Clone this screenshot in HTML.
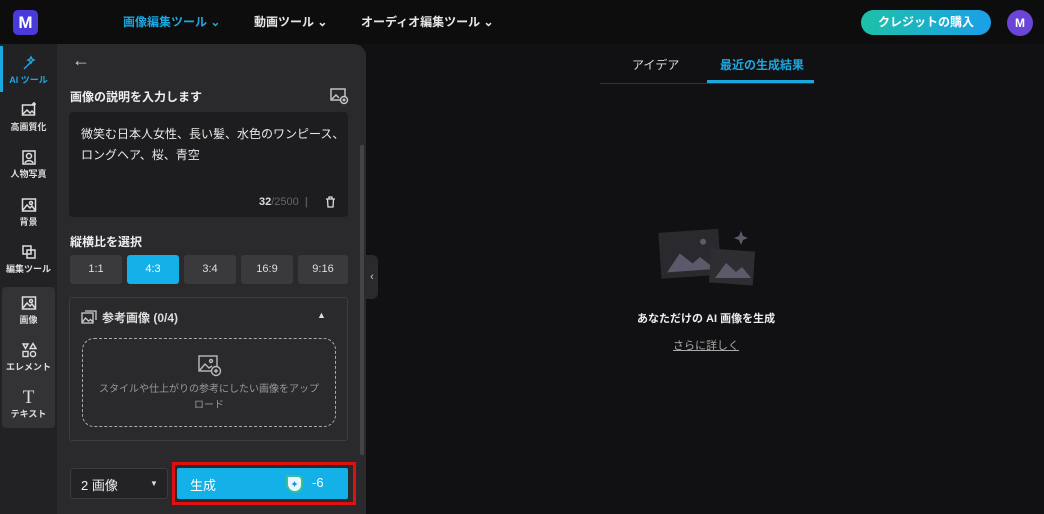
<!DOCTYPE html>
<html><head><meta charset="utf-8"><style>
*{box-sizing:border-box;margin:0;padding:0}
body{width:1044px;height:514px;overflow:hidden;background:#111113;font-family:"Liberation Sans","Noto Sans CJK JP",sans-serif;color:#e8e8e8;position:relative}
.a{position:absolute}
.top{left:0;top:0;width:1044px;height:44px;background:#0d0d0e}
.nav{top:13px;font-size:12px;font-weight:bold;color:#e6e6e6}
.side{left:0;top:44px;width:57px;height:470px;background:#222224}
.si{left:2px;width:53px;text-align:center;font-size:9px;font-weight:bold;color:#ddd}
.si svg{display:block;margin:0 auto 2px}
.panel{left:57px;top:44px;width:309px;height:470px;background:#2a2a2c;border-top-right-radius:12px}
.lbl{font-size:12px;font-weight:bold;color:#eee}
.ratio{top:255px;width:52px;height:29px;background:#3a3a3c;border-radius:3px;font-size:11px;text-align:center;line-height:29px;color:#ddd}
</style></head><body>
<div class="a top"></div>
<div class="a" style="left:13px;top:10px;width:25px;height:25px;border-radius:5px;background:#4b3adb;color:#fff;font-weight:bold;font-size:17px;text-align:center;line-height:25px">M</div>
<div class="a nav" style="left:123px;color:#1ba8e0">画像編集ツール ⌄</div>
<div class="a nav" style="left:254px">動画ツール ⌄</div>
<div class="a nav" style="left:361px">オーディオ編集ツール ⌄</div>
<div class="a" style="left:861px;top:10px;width:130px;height:25px;border-radius:13px;background:linear-gradient(90deg,#1fc0a8,#1aa0e8);color:#fff;font-size:12px;font-weight:bold;text-align:center;line-height:25px">クレジットの購入</div>
<div class="a" style="left:1007px;top:10px;width:26px;height:26px;border-radius:50%;background:#6a45d8;color:#fff;font-size:12px;font-weight:bold;text-align:center;line-height:26px">M</div>

<div class="a side"></div>
<div class="a" style="left:0;top:46px;width:3px;height:46px;background:#1ba8e0"></div>
<div class="a" style="left:2px;top:287px;width:53px;height:141px;background:#333335;border-radius:4px"></div>
<div class="a si" style="top:55px;color:#1ba8e0"><svg width="16" height="16" viewBox="0 0 16 16" fill="none" stroke="#1ba8e0" stroke-width="1.5"><path d="M3 14L11 6M10 2l1 2 2 1-2 1-1 2-1-2-2-1 2-1z"/></svg>AI ツール</div>
<div class="a si" style="top:102px"><svg width="16" height="16" viewBox="0 0 16 16" fill="none" stroke="#ddd" stroke-width="1.5"><rect x="1.5" y="3" width="12" height="10"/><path d="M2 12l4-4 3 3 2-2 3 3"/><path d="M13 0v4M11 2h4"/></svg>高画質化</div>
<div class="a si" style="top:149px"><svg width="16" height="16" viewBox="0 0 16 16" fill="none" stroke="#ddd" stroke-width="1.5"><rect x="2" y="2" width="12" height="13"/><circle cx="8" cy="7" r="2.5"/><path d="M4 14c1-3 7-3 8 0"/></svg>人物写真</div>
<div class="a si" style="top:197px"><svg width="16" height="16" viewBox="0 0 16 16" fill="none" stroke="#ddd" stroke-width="1.5"><rect x="1.5" y="2" width="13" height="12"/><path d="M2 13l4-5 3 3 2-2 3 4"/><circle cx="10" cy="6" r="1.5"/></svg>背景</div>
<div class="a si" style="top:244px"><svg width="16" height="16" viewBox="0 0 16 16" fill="none" stroke="#ddd" stroke-width="1.5"><rect x="2" y="2" width="8" height="8"/><rect x="6" y="6" width="8" height="8"/></svg>編集ツール</div>
<div class="a si" style="top:295px"><svg width="16" height="16" viewBox="0 0 16 16" fill="none" stroke="#ddd" stroke-width="1.5"><rect x="1.5" y="2" width="13" height="12"/><path d="M2 13l4-5 3 3 2-2 3 4"/><circle cx="10" cy="6" r="1.5"/></svg>画像</div>
<div class="a si" style="top:342px"><svg width="16" height="16" viewBox="0 0 16 16" fill="none" stroke="#ddd" stroke-width="1.4"><path d="M2 2h5L4.5 6.5z"/><path d="M12 1.5l3 5H9z"/><rect x="2" y="9.5" width="5" height="5"/><circle cx="12" cy="12" r="2.6"/></svg>エレメント</div>
<div class="a si" style="top:388px"><div style="font-size:19px;font-family:'Liberation Serif',serif;font-weight:normal;line-height:19px">T</div>テキスト</div>

<div class="a panel"></div>
<div class="a" style="left:72px;top:50px;font-size:18px;color:#ccc">←</div>
<div class="a lbl" style="left:70px;top:88px">画像の説明を入力します</div>
<svg class="a" style="left:330px;top:88px" width="19" height="17" viewBox="0 0 19 17" fill="none" stroke="#ccc" stroke-width="1.4"><rect x="1" y="1" width="14" height="11"/><path d="M2 11l4-4 3 3"/><circle cx="14" cy="12" r="3.5" fill="#2a2a2c"/><path d="M14 10.5v3M12.5 12h3"/></svg>
<div class="a" style="left:69px;top:112px;width:279px;height:105px;background:#1d1d1f;border-radius:4px"></div>
<div class="a" style="left:81px;top:124px;font-size:12px;line-height:21px;color:#e8e8e8">微笑む日本人女性、長い髪、水色のワンピース、<br>ロングヘア、桜、青空</div>
<div class="a" style="left:259px;top:196px;font-size:11px;font-weight:bold;color:#ddd">32<span style="color:#666;font-weight:normal">/2500</span> <span style="color:#555">&nbsp;|&nbsp;</span></div>
<svg class="a" style="left:325px;top:196px" width="11" height="12" viewBox="0 0 11 12" fill="none" stroke="#ddd" stroke-width="1.3"><path d="M1 3h9M4 3V1h3v2M2.5 3l.5 8h5l.5-8"/></svg>
<div class="a" style="left:360px;top:145px;width:4px;height:310px;background:#444;border-radius:2px"></div>
<div class="a lbl" style="left:70px;top:233px">縦横比を選択</div>
<div class="a ratio" style="left:70px">1:1</div>
<div class="a ratio" style="left:127px;background:#14b0e8;color:#fff">4:3</div>
<div class="a ratio" style="left:184px">3:4</div>
<div class="a ratio" style="left:241px">16:9</div>
<div class="a ratio" style="left:298px;width:50px">9:16</div>
<div class="a" style="left:69px;top:297px;width:279px;height:144px;border:1px solid #3c3c3e;border-radius:3px"></div>
<svg class="a" style="left:81px;top:310px" width="16" height="14" viewBox="0 0 16 14" fill="none" stroke="#ccc" stroke-width="1.3"><rect x="1" y="3" width="11" height="10"/><path d="M4 1h11v9"/><path d="M1.5 12l3-4 3 3 2-1.5 2.5 2.5"/></svg>
<div class="a" style="left:102px;top:309px;font-size:12px;font-weight:bold;color:#ddd">参考画像 (0/4)</div>
<div class="a" style="left:317px;top:310px;font-size:9px;color:#ddd">▲</div>
<div class="a" style="left:82px;top:338px;width:254px;height:89px;border:1.5px dashed #aaa;border-radius:12px"></div>
<svg class="a" style="left:198px;top:355px" width="24" height="22" viewBox="0 0 24 22" fill="none" stroke="#bbb" stroke-width="1.4"><rect x="1" y="1" width="18" height="15"/><path d="M2 15l5-6 4 4 3-2"/><circle cx="13" cy="6" r="1.5"/><circle cx="18" cy="16" r="4.5" fill="#2a2a2c"/><path d="M18 14v4M16 16h4"/></svg>
<div class="a" style="left:82px;top:382px;width:254px;text-align:center;font-size:10px;line-height:16px;color:#999">スタイルや仕上がりの参考にしたい画像をアップ<br>ロード</div>
<div class="a" style="left:70px;top:468px;width:98px;height:31px;border:1px solid #3c3c3e;border-radius:3px;background:#232325"></div>
<div class="a" style="left:81px;top:475px;font-size:13px;color:#eee">2 画像</div>
<div class="a" style="left:150px;top:479px;font-size:8px;color:#ddd">▼</div>
<div class="a" style="left:172px;top:462px;width:184px;height:43px;border:3px solid #e01010"></div>
<div class="a" style="left:177px;top:468px;width:171px;height:31px;background:#14b0e8;border-radius:2px"></div>
<div class="a" style="left:190px;top:475px;font-size:13px;color:#fff">生成</div>
<svg class="a" style="left:285px;top:474px" width="18" height="19" viewBox="0 0 18 19"><path d="M2 2h11a4 4 0 014 4v5a7 7 0 01-7 7h0a8 8 0 01-8-8z" fill="#eaf6ff" stroke="#37c090" stroke-width="2"/><path d="M9.5 7l1 2 2 1-2 1-1 2-1-2-2-1 2-1z" fill="#1a8fe0"/></svg>
<div class="a" style="left:312px;top:475px;font-size:13px;color:#fff">-6</div>
<div class="a" style="left:366px;top:255px;width:12px;height:44px;background:#2a2a2c;border-radius:0 6px 6px 0;color:#ccc;font-size:11px;line-height:44px;text-align:center">‹</div>

<div class="a" style="left:632px;top:56px;font-size:12px;color:#ddd">アイデア</div>
<div class="a" style="left:720px;top:56px;font-size:12px;color:#1ba8e0;font-weight:bold">最近の生成結果</div>
<div class="a" style="left:600px;top:83px;width:214px;height:1px;background:#333"></div>
<div class="a" style="left:707px;top:80px;width:107px;height:3px;background:#1ba8e0"></div>
<svg class="a" style="left:656px;top:226px" width="104" height="64">
<g transform="rotate(-4 30 30)"><rect x="4" y="5" width="60" height="46" fill="#2a2a2e"/><path d="M10 45 L24 27 L36 38 L44 32 L58 45Z" fill="#5c5a6a"/><circle cx="48" cy="17" r="3" fill="#5c5a6a"/></g>
<rect x="54" y="24" width="44" height="34" fill="#2e2e32" transform="rotate(4 76 41)"/><path d="M59 52 L70 37 L80 46 L86 41 L95 52Z" fill="#5c5a6a"/>
<path d="M85 5 L87 10 L92 12 L87 14 L85 19 L83 14 L78 12 L83 10Z" fill="#5c5a6a"/></svg>
<div class="a" style="left:637px;top:310px;font-size:11px;font-weight:bold;color:#eee">あなただけの AI 画像を生成</div>
<div class="a" style="left:673px;top:337px;font-size:11px;color:#aaa;text-decoration:underline">さらに詳しく</div>
</body></html>
